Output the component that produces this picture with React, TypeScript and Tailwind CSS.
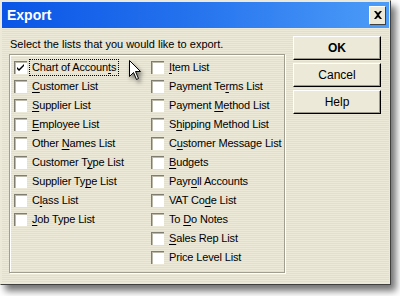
import React from "react";

type Item = { pre: string; key: string; post: string; checked?: boolean };

const leftItems: Item[] = [
  { pre: "Chart of Accoun", key: "t", post: "s", checked: true },
  { pre: "", key: "C", post: "ustomer List" },
  { pre: "", key: "S", post: "upplier List" },
  { pre: "", key: "E", post: "mployee List" },
  { pre: "Other ", key: "N", post: "ames List" },
  { pre: "Customer T", key: "y", post: "pe List" },
  { pre: "Supplier Ty", key: "p", post: "e List" },
  { pre: "C", key: "l", post: "ass List" },
  { pre: "", key: "J", post: "ob Type List" },
];

const rightItems: Item[] = [
  { pre: "", key: "I", post: "tem List" },
  { pre: "Payment Te", key: "r", post: "ms List" },
  { pre: "Payment ", key: "M", post: "ethod List" },
  { pre: "S", key: "h", post: "ipping Method List" },
  { pre: "C", key: "u", post: "stomer Message List" },
  { pre: "", key: "B", post: "udgets" },
  { pre: "Payr", key: "o", post: "ll Accounts" },
  { pre: "VAT Co", key: "d", post: "e List" },
  { pre: "To ", key: "D", post: "o Notes" },
  { pre: "", key: "S", post: "ales Rep List" },
  { pre: "Price Level List", key: "", post: "" },
];

const stripes =
  "bg-[repeating-linear-gradient(180deg,#ECE9D8_0px,#ECE9D8_1px,#E2DFCE_1px,#E2DFCE_2px)]";

function CheckRow({ item, focused }: { item: Item; focused?: boolean }) {
  return (
    <div className="flex h-[19px] items-center whitespace-nowrap">
      <div className="relative h-[13px] w-[13px] shrink-0 border-t border-l border-[#7f7c70] border-r-white border-b-white bg-white shadow-[inset_1px_1px_0_#bdbaac]">
        {item.checked && (
          <svg viewBox="0 0 11 11" className="absolute left-0 top-0 h-[11px] w-[11px]">
            <path d="M2 5 L4 7 L9 2 L9 4 L4 9 L2 7 Z" fill="#000" />
          </svg>
        )}
      </div>
      <span
        className={
          "ml-[3px] px-[2px] leading-[15px] tracking-[-0.15px] " +
          (focused ? "outline outline-1 outline-dotted outline-black" : "outline-none")
        }
      >
        {item.pre}
        {item.key && <span className="underline underline-offset-2">{item.key}</span>}
        {item.post}
      </span>
    </div>
  );
}

function Btn({ label, bold }: { label: string; bold?: boolean }) {
  return (
    <button className="h-[24px] w-[88px] border border-t-white border-l-white border-r-black border-b-black bg-[#ECE9D8] text-[12px] text-black shadow-[inset_-1px_-1px_0_#9d9a8c]">
      <span className={bold ? "font-bold" : ""}>{label}</span>
    </button>
  );
}

export default function App() {
  return (
    <div className="relative h-[296px] w-[400px] overflow-hidden bg-white font-['Liberation_Sans',Arial,sans-serif] text-[11px] text-black">
      <div className="flex h-[285px] w-[391px] flex-col border border-t-[#ECE9D8] border-l-[#ECE9D8] border-r-[#404040] border-b-[#404040] bg-[#ECE9D8] p-[1px] shadow-[5px_6px_7px_rgba(0,0,0,0.55)]">
        <div className="flex h-[26px] shrink-0 items-center justify-between bg-gradient-to-r from-[#0A55E6] via-[#2673EE] to-[#4C9CF8] pl-[5px] pr-[3px]">
          <span className="text-[14px] font-bold text-white">Export</span>
          <div className="flex h-[19px] w-[17px] items-center justify-center border border-t-white border-l-white border-r-[#404040] border-b-[#404040] bg-[#ECE9D8]">
            <svg viewBox="0 0 8 8" className="h-[8px] w-[8px]">
              <path d="M0 0 L2 0 L4 2 L6 0 L8 0 L5 4 L8 8 L6 8 L4 6 L2 8 L0 8 L3 4 Z" fill="#000" />
            </svg>
          </div>
        </div>
        <div className={"flex flex-1 px-[7px] " + stripes}>
          <div className="flex w-[276px] flex-col">
            <div className="mt-[9px] h-[15px] pl-[1px] leading-[15px]">
              Select the lists that you would like to export.
            </div>
            <div className="mt-[2px] mb-[10px] flex-1 border border-[#a19e90] pl-[4px] pt-[3px] shadow-[inset_1px_1px_0_#fff,1px_1px_0_#fff]">
              <div className="grid grid-cols-[137px_1fr]">
                <div>
                  {leftItems.map((it, i) => (
                    <CheckRow key={i} item={it} focused={i === 0} />
                  ))}
                </div>
                <div>
                  {rightItems.map((it, i) => (
                    <CheckRow key={i} item={it} />
                  ))}
                </div>
              </div>
            </div>
          </div>
          <div className="ml-[8px] mt-[8px] flex flex-col gap-[3px]">
            <Btn label="OK" bold />
            <Btn label="Cancel" />
            <Btn label="Help" />
          </div>
        </div>
      </div>
      <svg
        viewBox="0 0 14 22"
        className="absolute left-[129px] top-[60px] h-[22px] w-[14px] drop-shadow-[2px_3px_2px_rgba(0,0,0,0.5)]"
      >
        <path
          d="M0.5 0.5 L0.5 16.5 L4.5 12.5 L7.5 19.5 L9.5 18.5 L6.5 11.5 L11.5 11.5 Z"
          fill="#fff"
          stroke="#000"
          strokeWidth="1"
        />
      </svg>
    </div>
  );
}
